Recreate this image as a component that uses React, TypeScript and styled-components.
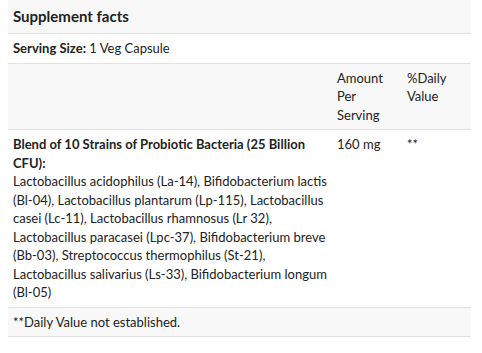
import { createGlobalStyle, styled } from 'styled-components'

const GlobalStyle = createGlobalStyle`
	body {
		margin: 0 8px;
		background: #fff;
		color: #222;
		font-family: Lato, "Open Sans", sans-serif;
	}
`

const StyledTable = styled.table`
	width: 463px;
	table-layout: fixed;
	border-collapse: collapse;
	font-size: 13px;
	line-height: 18.5px;
`
const StyledRow = styled.tr<{ $shaded?: boolean }>`
	background-color: ${({ $shaded }) => ($shaded ? '#f8f8f8' : '#fff')};
	border-bottom: 1px solid #e2e2e2;
`
const StyledTitle = styled.th`
	text-align: left;
	font-size: 15px;
	font-weight: 700;
	padding: 7px 5px;
	height: 19px;
`
const StyledCell = styled.td`
	vertical-align: top;
	padding: 5px 5px;
`
const StyledHeadCell = styled(StyledCell).attrs({ as: 'th' })`
	text-align: left;
	font-weight: 400;
`
const StyledStrong = styled.strong`
	font-weight: 700;
`
const StyledBlendName = styled.div`
	font-weight: 700;
`

const STRAINS = [
	'Lactobacillus acidophilus (La-14)',
	'Bifidobacterium lactis (Bl-04)',
	'Lactobacillus plantarum (Lp-115)',
	'Lactobacillus casei (Lc-11)',
	'Lactobacillus rhamnosus (Lr 32)',
	'Lactobacillus paracasei (Lpc-37)',
	'Bifidobacterium breve (Bb-03)',
	'Streptococcus thermophilus (St-21)',
	'Lactobacillus salivarius (Ls-33)',
	'Bifidobacterium longum (Bl-05)',
]

export default function App() {
	return (
		<>
			<GlobalStyle />
			<StyledTable>
				<colgroup>
					<col style={{ width: 324 }} />
					<col style={{ width: 70 }} />
					<col style={{ width: 69 }} />
				</colgroup>
				<tbody>
					<StyledRow $shaded>
						<StyledTitle colSpan={3}>Supplement facts</StyledTitle>
					</StyledRow>
					<StyledRow>
						<StyledCell colSpan={3}>
							<StyledStrong>Serving Size:</StyledStrong> 1 Veg Capsule
						</StyledCell>
					</StyledRow>
					<StyledRow $shaded>
						<StyledHeadCell />
						<StyledHeadCell>Amount Per Serving</StyledHeadCell>
						<StyledHeadCell>%Daily Value</StyledHeadCell>
					</StyledRow>
					<StyledRow>
						<StyledCell>
							<StyledBlendName>Blend of 10 Strains of Probiotic Bacteria (25 Billion CFU):</StyledBlendName>
							{STRAINS.join(', ')}
						</StyledCell>
						<StyledCell>160 mg</StyledCell>
						<StyledCell>**</StyledCell>
					</StyledRow>
					<StyledRow $shaded>
						<StyledCell colSpan={3}>**Daily Value not established.</StyledCell>
					</StyledRow>
				</tbody>
			</StyledTable>
		</>
	)
}
